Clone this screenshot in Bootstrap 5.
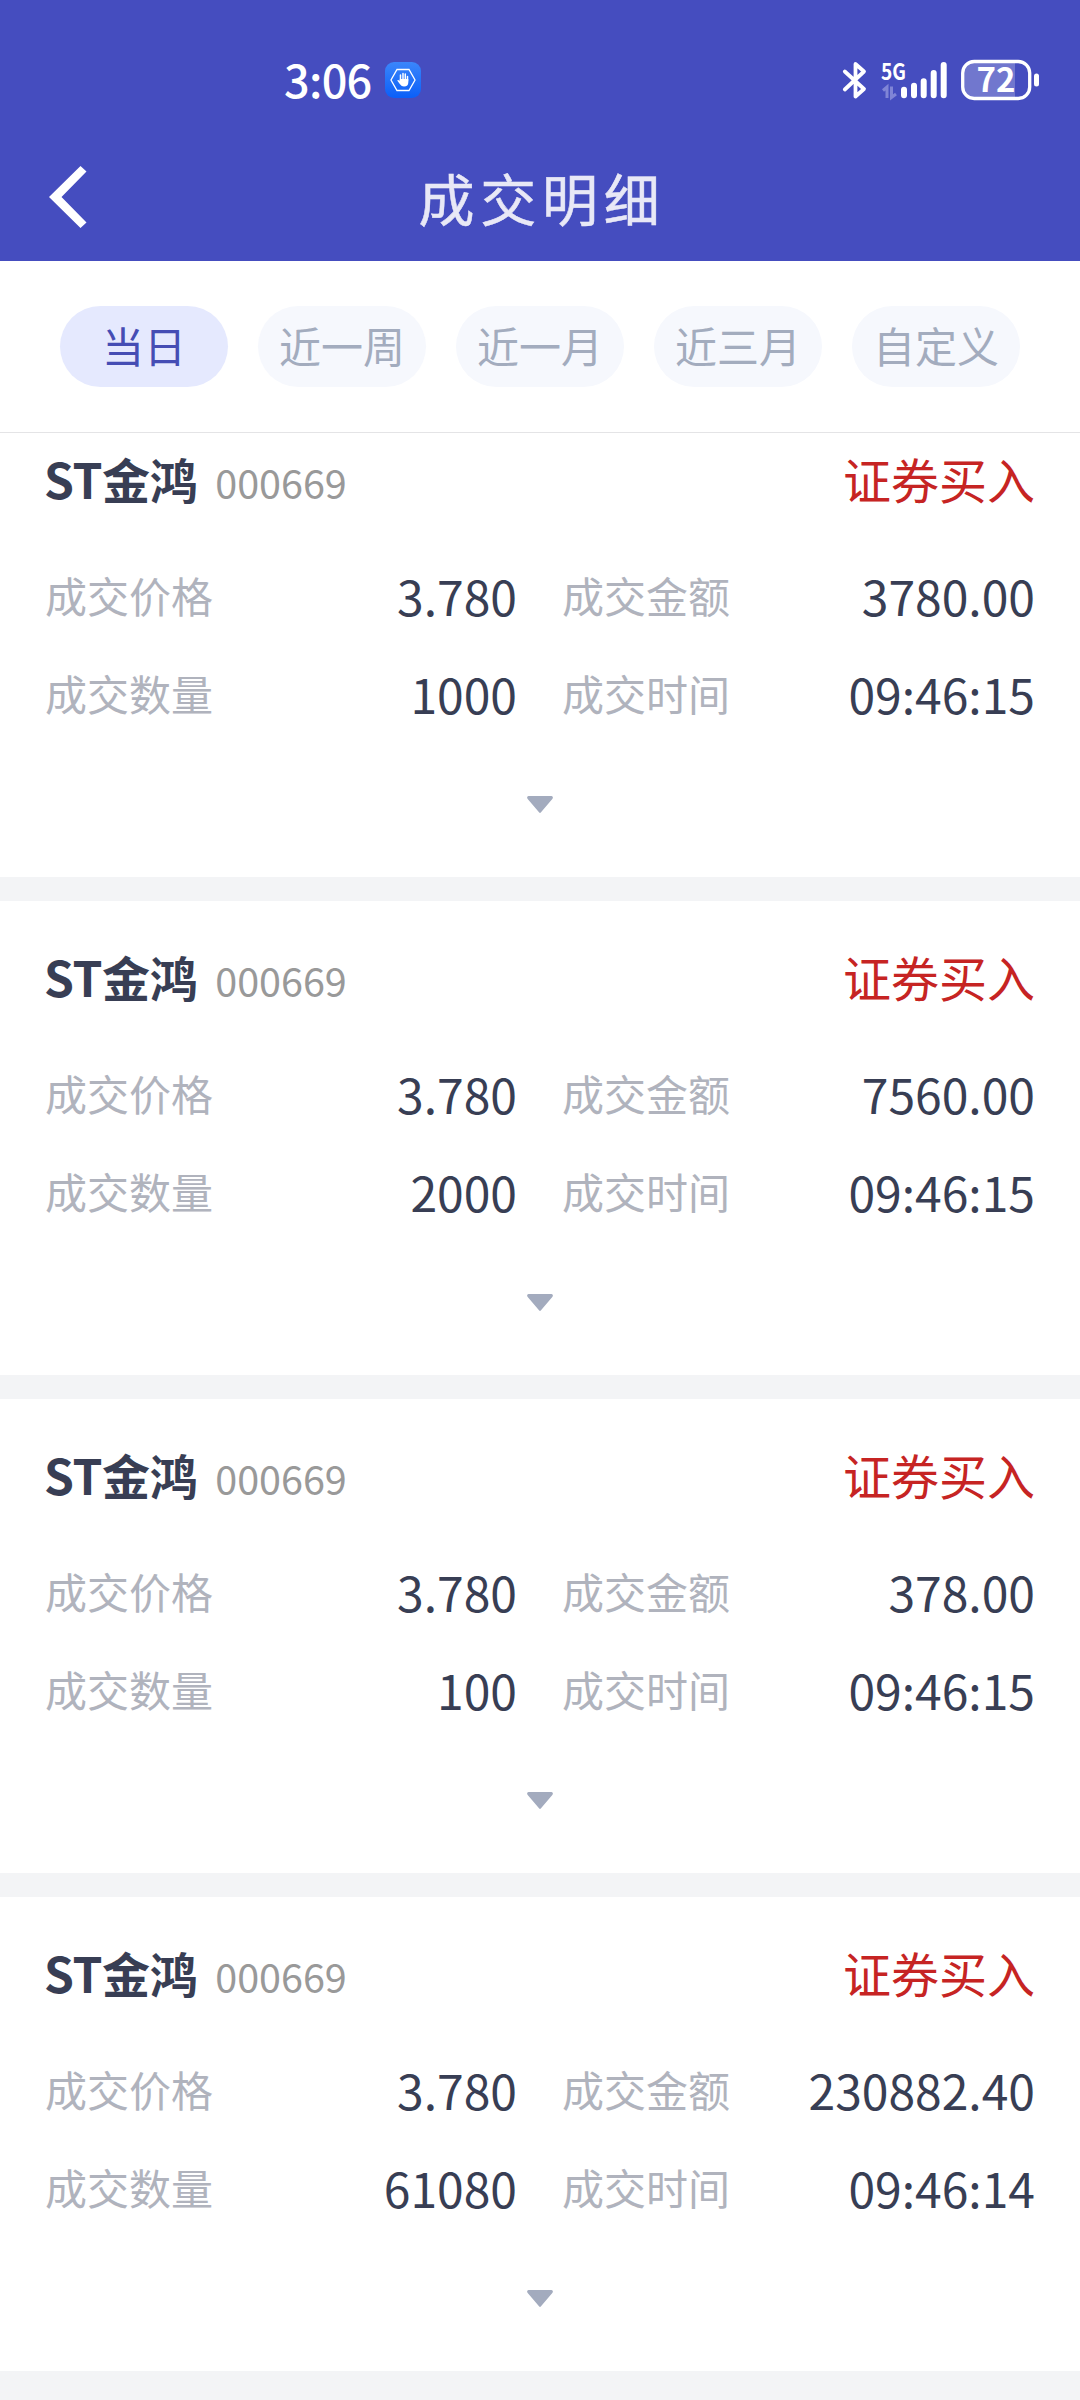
<!DOCTYPE html>
<html lang="zh-CN">
<head>
<meta charset="utf-8">
<meta name="viewport" content="width=device-width, initial-scale=1">
<title>成交明细</title>
<link href="https://cdn.jsdelivr.net/npm/bootstrap@5.3.0/dist/css/bootstrap.min.css" rel="stylesheet">
<style>
  body { font-family: "Noto Sans CJK SC", sans-serif; background: #f3f4f6; color: #383e54; width: 1080px; height: 2400px; overflow: hidden; }
  .app-header { background: #454dbf; height: 261px; }
  .status-bar { height: 138px; padding: 22px 40px 0 284px; color: #fff; }
  .clock { font-size: 45px; font-weight: 500; line-height: 60px; letter-spacing: -.7px; padding-bottom: 3px; }
  .title-bar { height: 122px; padding: 0 49px; }
  .page-title { font-size: 56px; font-weight: 400; letter-spacing: 5.8px; line-height: 80px; color: #e8e8f6; padding: 0 0 5px 4px; -webkit-text-stroke: .5px #e8e8f6; }
  .side-slot { width: 40px; }
  .range-tabs { height: 172px; padding: 0 60px; gap: 30px; border-bottom: 1px solid #e4e4e6; }
  .range-tabs .nav-link { width: 168px; height: 81px; padding: 0; border-radius: 41px; background: #f6f8fd; color: #a3acbe; font-size: 42px; line-height: 78px; text-align: center; }
  .range-tabs .nav-link.active { background: #e5e9fe; color: #454db4; }
  .deal { height: 474px; padding: 40px 45px 0; }
  .deal:first-child { height: 444px; padding-top: 10px; }
  .deal-head { height: 70px; margin-bottom: 33px; }
  .deal-name { font-size: 48px; font-weight: 700; line-height: 70px; letter-spacing: -.4px; margin-left: -1px; }
  .deal-code { font-size: 39.5px; line-height: 64px; padding-top: 8px; color: #999; margin-left: 18px; }
  .deal-type { font-size: 48px; line-height: 70px; color: #c62423; }
  .deal-grid { column-gap: 45px; display: grid; grid-template-columns: 472px 473px; }
  .cell { height: 98px; line-height: 98px; }
  .cell dt { font-size: 42px; font-weight: 400; color: #b0b3bd; }
  .cell dd { font-size: 48px; margin: 0; }
  .toggle { height: 100px; padding-top: 54px; }
  svg { display: block; }
  svg text { font-family: "Noto Sans CJK SC", sans-serif; }
</style>
</head>
<body>
<header class="app-header">
  <div class="status-bar d-flex align-items-center">
    <span class="clock">3:06</span>
    <svg class="app-mark" style="margin-left:13px" width="36" height="36" viewBox="0 0 36 36">
      <defs><linearGradient id="g" x1="0" y1="0" x2="0" y2="1"><stop offset="0" stop-color="#3b86fb"/><stop offset="1" stop-color="#0b5ff8"/></linearGradient></defs>
      <rect width="36" height="36" rx="9" fill="url(#g)"/>
      <path d="M12 7.500h12l6 10.500-6 10.500H12L6 18z" fill="none" stroke="#fff" stroke-width="1.300"/>
      <path d="M15.500 19v-6M18 18v-6.500M20.300 18v-6M22.500 19v-4.500" stroke="#fff" stroke-width="1.500" stroke-linecap="round"/>
      <path d="M14.800 17h8.500v3.500q0 4-4.300 4-2.500 0-4-2.300l-2.800-3.600q.7-1.300 2-.2l.6.7z" fill="#fff"/>
    </svg>
    <svg class="ms-auto" width="198" height="70" viewBox="842 44 198 70">
      <path d="M844.800 70.500 864 88 855.500 95.500V63L864 70.500 844.800 88.500" fill="none" stroke="#fff" stroke-width="3.800" stroke-linecap="round" stroke-linejoin="round"/>
      <text x="881" y="78.500" font-size="23" font-weight="700" fill="#fff" textLength="25" lengthAdjust="spacingAndGlyphs">5G</text>
      <path d="M883 89.500l4-3.500v11M891.500 85.500v11l4.500-3.500" fill="none" stroke="#8085d6" stroke-width="3"/>
      <g stroke="#fff" stroke-width="6" stroke-linecap="round"><path d="M904 88.700v5.600M914 84.700v9.600M923.700 80.300v14M933.700 72v22.300M943.700 64v30.300"/></g>
      <path d="M975 61h40v36h-40a12 12 0 0 1-12-12V73a12 12 0 0 1 12-12z" fill="#fff" opacity=".24"/>
      <rect x="962.700" y="60.500" width="67" height="37" rx="11.500" fill="none" stroke="#fff" stroke-width="3.300"/>
      <rect x="1034" y="72.500" width="5" height="13" rx="2.500" fill="#fff"/>
      <text x="996" y="91" text-anchor="middle" font-size="33" font-weight="700" fill="#fff">72</text>
    </svg>
  </div>
  <div class="title-bar d-flex align-items-center justify-content-between">
    <a href="#" class="side-slot" aria-label="返回"><svg width="38" height="66" viewBox="0 0 38 66"><path d="M0 31 31.500 0l6 5.500L12.500 31l25 25.500-6 5.500z" fill="#fff"/></svg></a>
    <h1 class="page-title m-0">成交明细</h1>
    <span class="side-slot"></span>
  </div>
</header>

<nav class="range-tabs nav flex-nowrap align-items-center bg-white">
  <a class="nav-link active" href="#">当日</a>
  <a class="nav-link" href="#">近一周</a>
  <a class="nav-link" href="#">近一月</a>
  <a class="nav-link" href="#">近三月</a>
  <a class="nav-link" href="#">自定义</a>
</nav>

<main class="d-flex flex-column gap-4">
  <section class="deal bg-white">
    <div class="deal-head d-flex align-items-center"><span class="deal-name">ST金鸿</span><span class="deal-code">000669</span><span class="deal-type ms-auto">证券买入</span></div>
    <div class="deal-grid">
      <dl class="cell d-flex justify-content-between m-0"><dt>成交价格</dt><dd>3.780</dd></dl>
      <dl class="cell d-flex justify-content-between m-0"><dt>成交金额</dt><dd>3780.00</dd></dl>
      <dl class="cell d-flex justify-content-between m-0"><dt>成交数量</dt><dd>1000</dd></dl>
      <dl class="cell d-flex justify-content-between m-0"><dt>成交时间</dt><dd>09:46:15</dd></dl>
    </div>
    <div class="toggle d-flex justify-content-center"><svg width="26" height="17" viewBox="0 0 26 17"><path d="M1.500 0h23q2.300.8.8 3L14 16.300q-1 1.200-2 0L.7 3Q-.8.800 1.500 0z" fill="#a3abbe"/></svg></div>
  </section>
  <section class="deal bg-white">
    <div class="deal-head d-flex align-items-center"><span class="deal-name">ST金鸿</span><span class="deal-code">000669</span><span class="deal-type ms-auto">证券买入</span></div>
    <div class="deal-grid">
      <dl class="cell d-flex justify-content-between m-0"><dt>成交价格</dt><dd>3.780</dd></dl>
      <dl class="cell d-flex justify-content-between m-0"><dt>成交金额</dt><dd>7560.00</dd></dl>
      <dl class="cell d-flex justify-content-between m-0"><dt>成交数量</dt><dd>2000</dd></dl>
      <dl class="cell d-flex justify-content-between m-0"><dt>成交时间</dt><dd>09:46:15</dd></dl>
    </div>
    <div class="toggle d-flex justify-content-center"><svg width="26" height="17" viewBox="0 0 26 17"><path d="M1.500 0h23q2.300.8.8 3L14 16.300q-1 1.200-2 0L.7 3Q-.8.800 1.500 0z" fill="#a3abbe"/></svg></div>
  </section>
  <section class="deal bg-white">
    <div class="deal-head d-flex align-items-center"><span class="deal-name">ST金鸿</span><span class="deal-code">000669</span><span class="deal-type ms-auto">证券买入</span></div>
    <div class="deal-grid">
      <dl class="cell d-flex justify-content-between m-0"><dt>成交价格</dt><dd>3.780</dd></dl>
      <dl class="cell d-flex justify-content-between m-0"><dt>成交金额</dt><dd>378.00</dd></dl>
      <dl class="cell d-flex justify-content-between m-0"><dt>成交数量</dt><dd>100</dd></dl>
      <dl class="cell d-flex justify-content-between m-0"><dt>成交时间</dt><dd>09:46:15</dd></dl>
    </div>
    <div class="toggle d-flex justify-content-center"><svg width="26" height="17" viewBox="0 0 26 17"><path d="M1.500 0h23q2.300.8.8 3L14 16.300q-1 1.200-2 0L.7 3Q-.8.800 1.500 0z" fill="#a3abbe"/></svg></div>
  </section>
  <section class="deal bg-white">
    <div class="deal-head d-flex align-items-center"><span class="deal-name">ST金鸿</span><span class="deal-code">000669</span><span class="deal-type ms-auto">证券买入</span></div>
    <div class="deal-grid">
      <dl class="cell d-flex justify-content-between m-0"><dt>成交价格</dt><dd>3.780</dd></dl>
      <dl class="cell d-flex justify-content-between m-0"><dt>成交金额</dt><dd>230882.40</dd></dl>
      <dl class="cell d-flex justify-content-between m-0"><dt>成交数量</dt><dd>61080</dd></dl>
      <dl class="cell d-flex justify-content-between m-0"><dt>成交时间</dt><dd>09:46:14</dd></dl>
    </div>
    <div class="toggle d-flex justify-content-center"><svg width="26" height="17" viewBox="0 0 26 17"><path d="M1.500 0h23q2.300.8.8 3L14 16.300q-1 1.200-2 0L.7 3Q-.8.800 1.500 0z" fill="#a3abbe"/></svg></div>
  </section>
</main>
<script src="https://cdn.jsdelivr.net/npm/bootstrap@5.3.0/dist/js/bootstrap.bundle.min.js"></script>
</body>
</html>
